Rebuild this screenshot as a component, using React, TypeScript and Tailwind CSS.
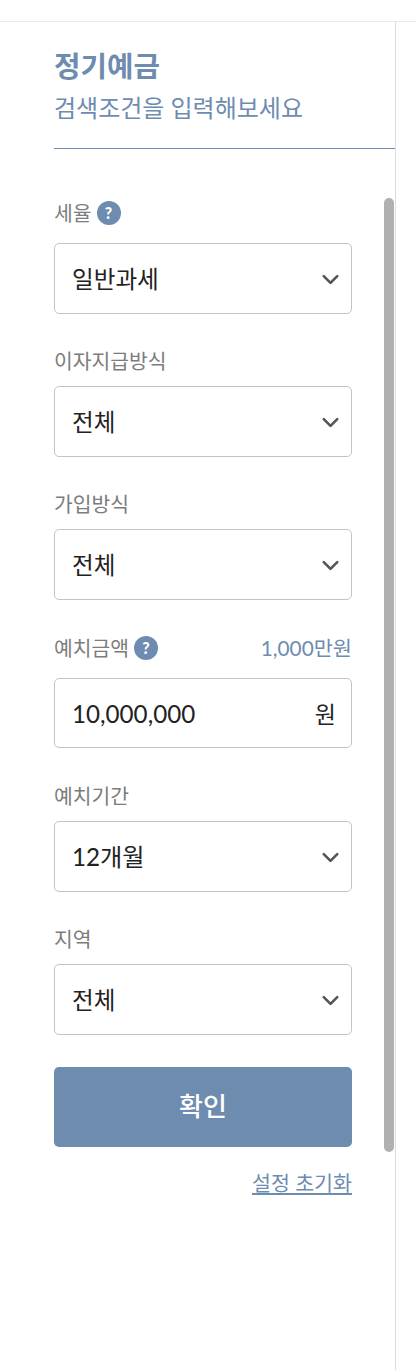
import { ChevronDown } from "lucide-react";
import type { ReactNode } from "react";

const font = "font-['Lato','Noto_Sans_CJK_KR',sans-serif]";

function Help() {
  return (
    <span className="ml-[5px] flex h-6 w-6 items-center justify-center rounded-full bg-[#6e8bb0] text-[16px] font-black leading-none text-white">
      ?
    </span>
  );
}

function Label({ children, help }: { children: ReactNode; help?: boolean }) {
  return (
    <div className={`flex items-center text-[20.4px] text-[#7c7c7c] ${help ? "h-[32px]" : "h-[30px]"}`}>
      {children}
      {help && <Help />}
    </div>
  );
}

function Select({ value, help, wide }: { value: string; help?: boolean; wide?: boolean }) {
  return (
    <div
      className={`flex h-[70.5px] items-center justify-between rounded-[5px] border border-[#c4c4c4] bg-white pl-[17px] pr-[7px] pt-[2px] text-[#222222] ${
        help ? "mt-[14px]" : "mt-[10px]"
      } ${wide ? "text-[24.2px]" : "text-[23.6px]"}`}
    >
      <span>{value}</span>
      <ChevronDown className="h-[27px] w-[27px] text-[#555555]" strokeWidth={2.3} />
    </div>
  );
}

export default function App() {
  return (
    <div className={`${font} h-[1370px] w-[416px] overflow-hidden bg-white`}>
      <div className="h-[22px] border-b border-[#e9e9e9]" />
      <div className="relative h-[1348px] w-[396px] border-r border-[#dcdcdc] pl-[54px]">
        <div className="pt-[24px]">
          <h1 className="text-[28.8px] font-bold leading-[40px] text-[#6e8bb0]">정기예금</h1>
          <p className="mt-[2px] text-[24px] leading-[40px] text-[#6e8bb0]">검색조건을 입력해보세요</p>
        </div>
        <div className="mt-[20px] h-px bg-[#6e8bb0]" />

        <div className="w-[298px] pt-[48px]">
          <Label help>세율</Label>
          <Select value="일반과세" help />

          <div className="mt-[32.5px]">
            <Label>이자지급방식</Label>
            <Select value="전체" />
          </div>

          <div className="mt-[32.5px]">
            <Label>가입방식</Label>
            <Select value="전체" />
          </div>

          <div className="mt-[32.5px]">
            <div className="flex items-center justify-between">
              <Label help>예치금액</Label>
              <span className="text-[20.8px] leading-[30px] text-[#6e8bb0]">1,000만원</span>
            </div>
            <div className="mt-[14px] flex h-[70px] items-center justify-between rounded-[5px] border border-[#c4c4c4] bg-white pl-[17px] pr-[15px] pt-[2px] text-[24.2px] text-[#222222]">
              <span>10,000,000</span>
              <span className="text-[23px]">원</span>
            </div>
          </div>

          <div className="mt-[33px]">
            <Label>예치기간</Label>
            <Select value="12개월" wide />
          </div>

          <div className="mt-[32.5px]">
            <Label>지역</Label>
            <Select value="전체" />
          </div>

          <button className="mt-[32px] flex h-[80px] w-full items-center justify-center rounded-[5px] bg-[#6e8bb0] text-[26px] font-medium text-white">
            확인
          </button>

          <div className="mt-[21px] text-right text-[20.6px] leading-[30px] text-[#6e8bb0] underline">설정 초기화</div>
        </div>

        <div className="absolute left-[384px] top-[176px] h-[954px] w-[10px] rounded-full bg-[#b0b0b0]" />
      </div>
    </div>
  );
}
